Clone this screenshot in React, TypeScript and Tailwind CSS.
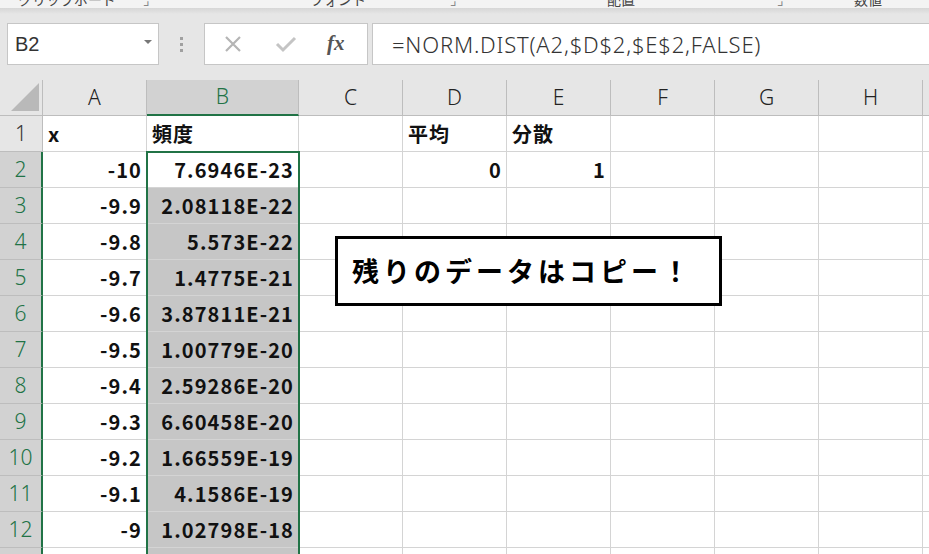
import React from "react";

const cols = [
  { key: "A", w: "w-[104px]" },
  { key: "B", w: "w-[152px]" },
  { key: "C", w: "w-[104px]" },
  { key: "D", w: "w-[104px]" },
  { key: "E", w: "w-[104px]" },
  { key: "F", w: "w-[104px]" },
  { key: "G", w: "w-[104px]" },
  { key: "H", w: "w-[104px]" },
];

const xs = ["-10", "-9.9", "-9.8", "-9.7", "-9.6", "-9.5", "-9.4", "-9.3", "-9.2", "-9.1", "-9"];
const freq = [
  "7.6946E-23",
  "2.08118E-22",
  "5.573E-22",
  "1.4775E-21",
  "3.87811E-21",
  "1.00779E-20",
  "2.59286E-20",
  "6.60458E-20",
  "1.66559E-19",
  "4.1586E-19",
  "1.02798E-18",
];

const cellFont = { fontFamily: '"Noto Sans CJK JP", "Noto Sans", sans-serif' };

function Cell({ w, children, right, bg }: { w: string; children?: React.ReactNode; right?: boolean; bg?: string }) {
  return (
    <div
      className={`${w} h-[36px] shrink-0 border-r border-b border-[#d4d4d4] flex items-center px-[5px] text-[20px] font-bold text-[#111] tracking-[1.1px] ${
        right ? "justify-end pr-[4px]" : "justify-start"
      } ${bg ?? "bg-white"}`}
      style={cellFont}
    >
      {children}
    </div>
  );
}

export default function App() {
  const rows: { n: number; cells: Record<string, string> }[] = [
    { n: 1, cells: { A: "x", B: "頻度", D: "平均", E: "分散" } },
  ];
  xs.forEach((x, i) => {
    const c: Record<string, string> = { A: x, B: freq[i] };
    if (i === 0) {
      c.D = "0";
      c.E = "1";
    }
    rows.push({ n: i + 2, cells: c });
  });
  rows.push({ n: 13, cells: { A: "-8.9", B: "2.50622E-18" } });

  return (
    <div className="w-[929px] h-[554px] overflow-hidden bg-[#e6e6e6] relative" style={{ fontFamily: '"Noto Sans CJK JP", "Noto Sans", sans-serif' }}>
      {/* ribbon remnant */}
      <div className="h-[8px] bg-[#f3f3f3] overflow-hidden relative text-[14px] text-[#444] leading-none">
        <div className="flex -mt-[8px] items-start">
          <span className="ml-[18px] w-[125px]">クリップボード</span>
          <span className="text-[#888]">⌟</span>
          <span className="ml-[160px] w-[300px]">フォント</span>
          <span className="text-[#888] -ml-[160px]">⌟</span>
          <span className="ml-[150px] w-[170px]">配置</span>
          <span className="text-[#888]">⌟</span>
          <span className="ml-[70px]">数値</span>
        </div>
      </div>
      <div className="h-[6px] bg-gradient-to-b from-[#d6d6d6] to-[#e6e6e6]" />

      {/* formula bar */}
      <div className="h-[66px] flex items-start pt-[9px]">
        <div className="ml-[7px] w-[152px] h-[42px] bg-white border border-[#c6c6c6] flex items-center justify-between pl-[7px] pr-[6px]">
          <span className="text-[20px] text-[#333]" style={{ fontFamily: '"Liberation Sans", Arial, sans-serif' }}>B2</span>
          <span className="w-0 h-0 border-l-[4px] border-r-[4px] border-t-[4px] border-l-transparent border-r-transparent border-t-[#777] mb-[4px]" />
        </div>
        <div className="w-[45px] h-[42px] flex flex-col items-center justify-center gap-[3px]">
          <span className="w-[3px] h-[3px] bg-[#a0a0a0]" />
          <span className="w-[3px] h-[3px] bg-[#a0a0a0]" />
          <span className="w-[3px] h-[3px] bg-[#a0a0a0]" />
        </div>
        <div className="w-[164px] h-[42px] bg-white border border-[#c6c6c6] flex items-center">
          <svg width="20" height="20" viewBox="0 0 20 20" className="ml-[18px]">
            <path d="M3 3 L17 17 M17 3 L3 17" stroke="#b5b5b5" strokeWidth="2.2" fill="none" />
          </svg>
          <svg width="22" height="20" viewBox="0 0 22 20" className="ml-[32px]">
            <path d="M2 10 L8 16 L20 4" stroke="#c4c4c4" strokeWidth="3" fill="none" />
          </svg>
          <span
            className="ml-[30px] text-[21px] italic font-bold text-[#555]"
            style={{ fontFamily: '"Liberation Serif", "Times New Roman", serif' }}
          >
            fx
          </span>
        </div>
        <div className="ml-[4px] flex-1 h-[42px] bg-white border border-[#c6c6c6] border-r-0 flex items-center pl-[19px]">
          <span className="text-[22px] text-[#333] tracking-[0.8px]" style={{ fontFamily: '"Noto Sans", sans-serif', fontWeight: 300 }}>
            =NORM.DIST(A2,$D$2,$E$2,FALSE)
          </span>
        </div>
      </div>

      {/* grid */}
      <div className="relative">
        {/* column header */}
        <div className="flex h-[36px]">
          <div className="w-[43px] h-[36px] shrink-0 bg-[#e6e6e6] border-r border-b border-[#bdbdbd] flex items-end justify-end pr-[3px] pb-[4px]">
            <svg width="28" height="28" viewBox="0 0 28 28">
              <path d="M28 0 L28 28 L0 28 Z" fill="#b9b9b9" />
            </svg>
          </div>
          {cols.map((c) => (
            <div
              key={c.key}
              className={`${c.w} h-[36px] shrink-0 flex items-center justify-center text-[21px] ${
                c.key === "B"
                  ? "bg-[#d2d2d2] text-[#217346] border-b-2 border-b-[#217346] border-r border-r-[#bdbdbd]"
                  : "bg-[#e6e6e6] text-[#222] border-r border-b border-[#bdbdbd]"
              }`}
              style={{ fontFamily: '"Noto Sans", sans-serif', fontWeight: 300 }}
            >
              {c.key}
            </div>
          ))}
          <div className="flex-1 h-[36px] bg-[#e6e6e6] border-b border-[#bdbdbd]" />
        </div>

        {rows.map((r) => (
          <div key={r.n} className="flex h-[36px]">
            <div
              className={`w-[43px] h-[36px] shrink-0 flex items-center justify-center text-[21px] border-b border-[#bdbdbd] ${
                r.n === 1
                  ? "bg-[#e6e6e6] text-[#333] border-r border-r-[#bdbdbd]"
                  : "bg-[#d2d2d2] text-[#217346] border-r-2 border-r-[#217346]"
              }`}
              style={{ fontFamily: '"Noto Sans", sans-serif', fontWeight: 300 }}
            >
              {r.n}
            </div>
            {cols.map((c) => {
              const v = r.cells[c.key];
              const numeric = v !== undefined && /^-?[0-9]/.test(v);
              const bg = c.key === "B" && r.n >= 3 ? "bg-[#c6c6c6]" : "bg-white";
              return (
                <Cell key={c.key} w={c.w} right={numeric} bg={bg}>
                  {v}
                </Cell>
              );
            })}
            <div className="flex-1 h-[36px] bg-white border-b border-[#d4d4d4]" />
          </div>
        ))}

        {/* selection outline B2:B13 */}
        <div className="absolute left-[146px] top-[71px] w-[154px] h-[460px] border-2 border-[#217346] pointer-events-none" />

        {/* callout */}
        <div
          className="absolute left-[335px] top-[156px] w-[387px] h-[70px] bg-white border-[3px] border-black flex items-center pl-[14px] text-[27px] font-bold text-black tracking-[4px]"
          style={{ fontFamily: '"Noto Sans CJK JP", sans-serif' }}
        >
          残りのデータはコピー！
        </div>
      </div>
    </div>
  );
}
